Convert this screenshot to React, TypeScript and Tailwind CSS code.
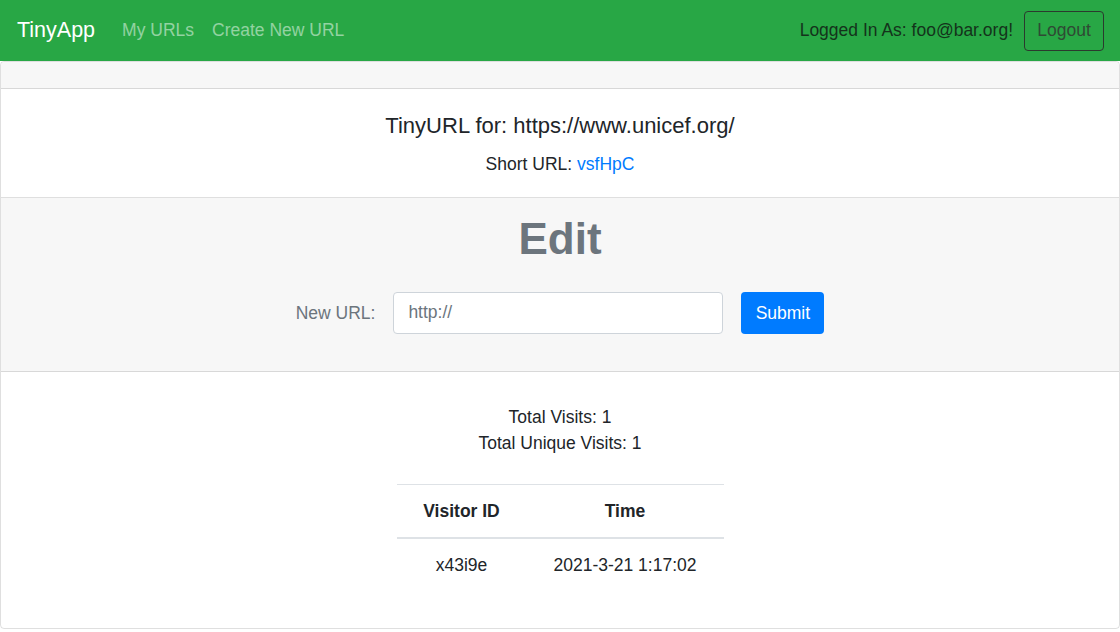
export default function App() {
  const visits = [{ id: 'x43i9e', time: '2021-3-21 1:17:02' }]

  return (
    <div className="min-h-screen bg-white text-[17.5px] text-[#212529] font-['Liberation_Sans',Arial,sans-serif]">
      <nav className="flex h-[61px] items-center justify-between bg-[#28a745] pl-[17px] pr-4">
        <div className="flex items-center">
          <a href="#" className="text-[21.5px] text-white">TinyApp</a>
          <a href="#" className="ml-[27px] text-[17.5px] text-white/50">My URLs</a>
          <a href="#" className="ml-[18px] text-[17.5px] text-white/50">Create New URL</a>
        </div>
        <div className="flex items-center">
          <span className="text-[17.5px] text-[#14331b]">Logged In As: foo@bar.org!</span>
          <button className="ml-[11px] h-10 w-20 rounded-[4px] border border-[#2b3a2e] text-[17.5px] text-[#2f4a34]">
            Logout
          </button>
        </div>
      </nav>

      <div className="rounded-[4px] border border-black/[0.125]">
        <div className="h-[27px] rounded-t-[4px] border-b border-black/[0.125] bg-[#f7f7f7]" />

        <div className="flex h-[109px] flex-col items-center border-b border-black/[0.125]">
          <h5 className="mt-[20px] text-[22px]">TinyURL for: https://www.unicef.org/</h5>
          <p className="mt-[9px]">
            Short URL: <a href="#" className="text-[#007bff]">vsfHpC</a>
          </p>
        </div>

        <div className="flex h-[174px] flex-col items-center border-b border-black/[0.125] bg-[#f7f7f7]">
          <h1 className="mt-[15px] text-[44px] font-bold leading-[1.2] text-[#6c757d]">Edit</h1>
          <form className="mt-[26px] flex items-center">
            <label className="text-[#6c757d]">New URL:</label>
            <input
              type="text"
              placeholder="http://"
              className="ml-[18px] h-[42px] w-[330px] rounded-[4px] border border-[#ced4da] bg-white px-[14px] text-[17.5px] placeholder:text-[#6c757d] outline-none"
            />
            <button
              type="button"
              className="ml-[18px] h-[42px] w-[83px] rounded-[4px] bg-[#007bff] text-white"
            >
              Submit
            </button>
          </form>
        </div>

        <div className="flex h-[256px] flex-col items-center">
          <p className="mt-[32px] leading-[26px]">Total Visits: 1</p>
          <p className="leading-[26px]">Total Unique Visits: 1</p>
          <table className="mt-[28px] w-[327px] text-center">
            <thead>
              <tr className="border-t border-[#dee2e6]">
                <th className="h-[53px] w-[130px] border-b-2 border-[#dee2e6] font-bold">Visitor ID</th>
                <th className="h-[53px] border-b-2 border-[#dee2e6] font-bold">Time</th>
              </tr>
            </thead>
            <tbody>
              {visits.map((v) => (
                <tr key={v.id}>
                  <td className="h-[55px]">{v.id}</td>
                  <td className="h-[55px]">{v.time}</td>
                </tr>
              ))}
            </tbody>
          </table>
        </div>
      </div>
    </div>
  )
}
